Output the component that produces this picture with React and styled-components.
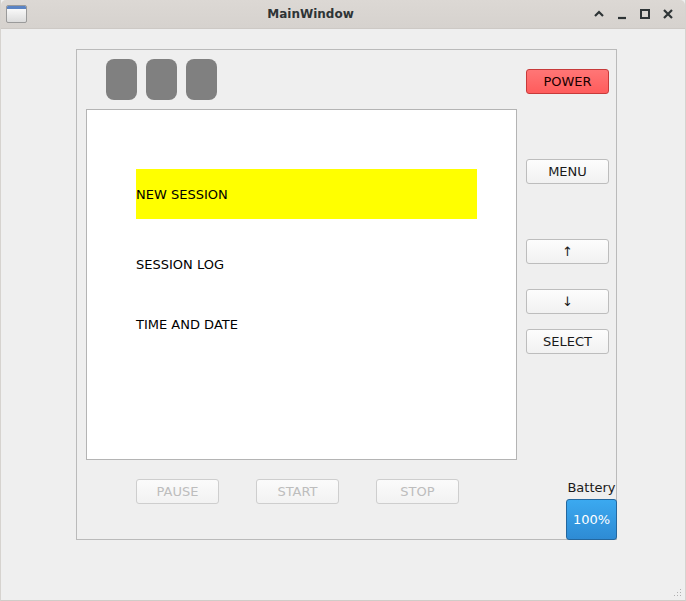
import React from "react";
import styled, { createGlobalStyle, css } from "styled-components";

const Global = createGlobalStyle`
  html, body { margin: 0; padding: 0; background: #efefef; }
  body { font-family: "DejaVu Sans", "Liberation Sans", sans-serif; }
  #root { width: 686px; height: 601px; }
`;

const Window = styled.div`
  width: 686px;
  height: 601px;
  display: flex;
  flex-direction: column;
  box-sizing: border-box;
  background: #efefef;
  border-left: 1px solid #d6d3cf;
  border-right: 1px solid #d6d3cf;
  border-bottom: 1px solid #d0ccc8;
  position: relative;
`;

const TitleBar = styled.div`
  height: 29px;
  flex: none;
  box-sizing: border-box;
  display: flex;
  align-items: center;
  padding: 0 10px 0 5px;
  background: linear-gradient(#dcd8d4, #d6d2ce);
  border-bottom: 1px solid #cdc9c5;
  border-radius: 5px 5px 0 0;
`;

const AppIcon = styled.div`
  width: 21px;
  height: 18px;
  box-sizing: border-box;
  border: 1px solid #9a9a9a;
  border-radius: 2px;
  background: linear-gradient(#ffffff, #dcdcdc);
  position: relative;
  overflow: hidden;
  &::before {
    content: "";
    position: absolute;
    left: 0;
    right: 0;
    top: 0;
    height: 3px;
    background: #5b84c4;
  }
`;

const Title = styled.div`
  flex: 1;
  text-align: center;
  font-weight: bold;
  font-size: 12px;
  color: #2e3436;
  padding-left: 2px;
`;

const Controls = styled.div`
  display: flex;
  align-items: center;
  gap: 9px;
`;

const CtrlIcon = styled.svg`
  width: 14px;
  height: 14px;
  display: block;
`;

const Content = styled.div`
  flex: 1;
  padding: 20px 0 0 75px;
`;

const Frame = styled.div`
  width: 541px;
  height: 491px;
  box-sizing: border-box;
  border: 1px solid #bababa;
  display: flex;
`;

const LeftCol = styled.div`
  width: 439px;
  display: flex;
  flex-direction: column;
  padding-left: 9px;
  box-sizing: border-box;
`;

const Lights = styled.div`
  display: flex;
  gap: 9px;
  margin: 9px 0 0 20px;
`;

const Light = styled.div`
  width: 31px;
  height: 41px;
  border-radius: 8px;
  background: #808080;
`;

const Screen = styled.div`
  margin-top: 9px;
  width: 431px;
  height: 351px;
  box-sizing: border-box;
  background: #ffffff;
  border: 1px solid #b4b4b4;
  padding: 59px 0 0 49px;
  display: flex;
  flex-direction: column;
`;

const MenuItem = styled.div`
  width: 341px;
  height: 50px;
  display: flex;
  align-items: center;
  font-size: 13px;
  color: #000;
  margin-top: ${(p) => p.$gap || 0}px;
  background: ${(p) => (p.$active ? "#ffff00" : "transparent")};
`;

const BottomRow = styled.div`
  display: flex;
  gap: 37px;
  margin: 19px 0 0 50px;
`;

const Button = styled.button`
  width: 83px;
  height: 25px;
  box-sizing: border-box;
  padding: 0;
  font-family: "DejaVu Sans", "Liberation Sans", sans-serif;
  font-size: 13px;
  color: #1a1a1a;
  border: 1px solid #bdbdbd;
  border-radius: 3px;
  background: linear-gradient(#fdfdfd, #f1f1f1);
  margin-top: ${(p) => p.$mt || 0}px;
  flex: none;
  ${(p) =>
    p.disabled &&
    css`
      color: #bdbdbd;
      border-color: #cecece;
      background: linear-gradient(#fbfbfb, #f2f2f2);
    `}
  ${(p) =>
    p.$power &&
    css`
      background: linear-gradient(#ff7676, #ff5c5c);
      border-color: #c73a3a;
      color: #1a0000;
    `}
`;

const RightCol = styled.div`
  flex: 1;
  display: flex;
  flex-direction: column;
  padding: 19px 0 0 10px;
`;

const BatteryBox = styled.div`
  margin-top: auto;
  margin-right: -1px;
  margin-bottom: -1px;
  align-self: flex-end;
  display: flex;
  flex-direction: column;
  align-items: center;
`;

const BatteryLabel = styled.div`
  font-size: 13px;
  color: #1a1a1a;
  margin-bottom: 4px;
`;

const BatteryButton = styled.div`
  width: 51px;
  height: 41px;
  box-sizing: border-box;
  border: 1px solid #24679e;
  border-radius: 3px;
  background: linear-gradient(#3ba9f0, #2e8bd4);
  color: #ffffff;
  font-size: 13px;
  display: flex;
  align-items: center;
  justify-content: center;
`;

const Grip = styled.svg`
  position: absolute;
  right: 3px;
  bottom: 3px;
  width: 10px;
  height: 10px;
`;

export default function App() {
  return (
    <>
      <Global />
      <Window>
        <TitleBar>
          <AppIcon />
          <Title>MainWindow</Title>
          <Controls>
            <CtrlIcon viewBox="0 0 14 14">
              <path d="M3 9 L7 5 L11 9" fill="none" stroke="#2e3436" strokeWidth="2.2" />
            </CtrlIcon>
            <CtrlIcon viewBox="0 0 14 14">
              <path d="M3 11 H11" fill="none" stroke="#2e3436" strokeWidth="2.2" />
            </CtrlIcon>
            <CtrlIcon viewBox="0 0 14 14">
              <rect x="3" y="3" width="8" height="8" fill="none" stroke="#2e3436" strokeWidth="2" />
            </CtrlIcon>
            <CtrlIcon viewBox="0 0 14 14">
              <path d="M3 3 L11 11 M11 3 L3 11" fill="none" stroke="#2e3436" strokeWidth="2.2" />
            </CtrlIcon>
          </Controls>
        </TitleBar>
        <Content>
          <Frame>
            <LeftCol>
              <Lights>
                <Light />
                <Light />
                <Light />
              </Lights>
              <Screen>
                <MenuItem $active>NEW SESSION</MenuItem>
                <MenuItem $gap={20}>SESSION LOG</MenuItem>
                <MenuItem $gap={10}>TIME AND DATE</MenuItem>
              </Screen>
              <BottomRow>
                <Button disabled>PAUSE</Button>
                <Button disabled>START</Button>
                <Button disabled>STOP</Button>
              </BottomRow>
            </LeftCol>
            <RightCol>
              <Button $power>POWER</Button>
              <Button $mt={65}>MENU</Button>
              <Button $mt={55}>↑</Button>
              <Button $mt={25}>↓</Button>
              <Button $mt={15}>SELECT</Button>
              <BatteryBox>
                <BatteryLabel>Battery</BatteryLabel>
                <BatteryButton>100%</BatteryButton>
              </BatteryBox>
            </RightCol>
          </Frame>
        </Content>
        <Grip viewBox="0 0 10 10">
          {[
            [8, 2], [8, 5], [8, 8], [5, 5], [5, 8], [2, 8],
          ].map(([x, y], i) => (
            <rect key={i} x={x} y={y} width="1" height="1" fill="#b0b0b0" />
          ))}
        </Grip>
      </Window>
    </>
  );
}
